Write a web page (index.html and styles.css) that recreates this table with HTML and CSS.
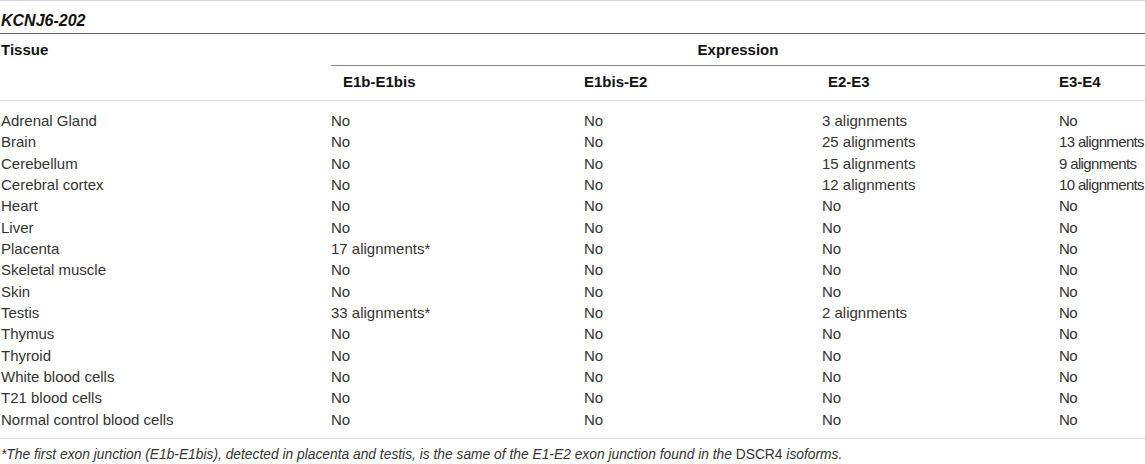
FILE: index.html
```html
<!DOCTYPE html>
<html>
<head>
  <meta charset='utf-8'>
  <title>KCNJ6-202 expression</title>
  <meta name='viewport' content='width=device-width, initial-scale=1'>
  <link rel="stylesheet" href="styles.css">
</head>
<body>
  <div class="table-wrap">
    <div class="title">KCNJ6-202</div>
    <table>
      <colgroup>
        <col class="c-tissue">
        <col class="c-e1">
        <col class="c-e2">
        <col class="c-e3">
        <col class="c-e4">
      </colgroup>
      <thead>
        <tr class="group">
          <th class="tissue" rowspan="2">Tissue</th>
          <th class="expr" colspan="4">Expression</th>
        </tr>
        <tr class="cols">
          <th class="h-e1">E1b-E1bis</th>
          <th class="h-e2">E1bis-E2</th>
          <th class="h-e3">E2-E3</th>
          <th class="h-e4">E3-E4</th>
        </tr>
      </thead>
      <tbody>
        <tr><td>Adrenal Gland</td><td>No</td><td>No</td><td>3 alignments</td><td>No</td></tr>
        <tr><td>Brain</td><td>No</td><td>No</td><td>25 alignments</td><td>13 alignments</td></tr>
        <tr><td>Cerebellum</td><td>No</td><td>No</td><td>15 alignments</td><td>9 alignments</td></tr>
        <tr><td>Cerebral cortex</td><td>No</td><td>No</td><td>12 alignments</td><td>10 alignments</td></tr>
        <tr><td>Heart</td><td>No</td><td>No</td><td>No</td><td>No</td></tr>
        <tr><td>Liver</td><td>No</td><td>No</td><td>No</td><td>No</td></tr>
        <tr><td>Placenta</td><td>17 alignments*</td><td>No</td><td>No</td><td>No</td></tr>
        <tr><td>Skeletal muscle</td><td>No</td><td>No</td><td>No</td><td>No</td></tr>
        <tr><td>Skin</td><td>No</td><td>No</td><td>No</td><td>No</td></tr>
        <tr><td>Testis</td><td>33 alignments*</td><td>No</td><td>2 alignments</td><td>No</td></tr>
        <tr><td>Thymus</td><td>No</td><td>No</td><td>No</td><td>No</td></tr>
        <tr><td>Thyroid</td><td>No</td><td>No</td><td>No</td><td>No</td></tr>
        <tr><td>White blood cells</td><td>No</td><td>No</td><td>No</td><td>No</td></tr>
        <tr><td>T21 blood cells</td><td>No</td><td>No</td><td>No</td><td>No</td></tr>
        <tr><td>Normal control blood cells</td><td>No</td><td>No</td><td>No</td><td>No</td></tr>
      </tbody>
    </table>
    <p class="note">*The first exon junction (E1b-E1bis), detected in placenta and testis, is the same of the E1-E2 exon junction found in the <span class="plain">DSCR4</span> isoforms.</p>
  </div>
</body>
</html>
```

FILE: styles.css
```css
*, *:before, *:after {
  box-sizing: border-box;
}
html, body {
  margin: 0;
  padding: 0;
  background: #fff;
  font-family: "Liberation Sans", Arial, sans-serif;
  font-size: 15px;
  color: #333;
  overflow: hidden;
}
.table-wrap {
  width: 1145px;
}
.title {
  border-top: 1px solid #d4d4d4;
  border-bottom: 1px solid #666;
  padding: 11px 0 3px 1px;
  line-height: 18px;
  font-size: 16px;
  font-weight: bold;
  font-style: italic;
  color: #111;
}
table {
  width: 1145px;
  table-layout: fixed;
  border-collapse: separate;
  border-spacing: 0;
}
.c-tissue { width: 331px; }
.c-e1 { width: 253px; }
.c-e2 { width: 238px; }
.c-e3 { width: 237px; }
.c-e4 { width: 86px; }
th {
  font-weight: bold;
  color: #111;
  text-align: left;
  line-height: 18px;
  padding: 0;
}
th.tissue {
  vertical-align: top;
  padding: 7px 0 0 1px;
  border-bottom: 1px solid #ddd;
}
th.expr {
  text-align: center;
  padding: 7px 0 6px;
  border-bottom: 1px solid #888;
}
tr.cols th {
  padding: 7px 0 9px;
  border-bottom: 1px solid #ddd;
}
tr.cols th.h-e1 { padding-left: 12px; }
tr.cols th.h-e3 { padding-left: 6px; }
td {
  padding: 0;
  line-height: 21.33px;
  white-space: nowrap;
}
td:first-child {
  padding-left: 1px;
}
td:last-child {
  letter-spacing: -0.65px;
}
tbody tr:first-child td {
  padding-top: 9px;
}
tbody tr:last-child td {
  padding-bottom: 8px;
  border-bottom: 1px solid #ddd;
}
.note {
  margin: 7px 0 0;
  padding-left: 1px;
  line-height: 18px;
  font-size: 13.8px;
  font-style: italic;
  color: #333;
}
.note .plain {
  font-style: normal;
}
```
